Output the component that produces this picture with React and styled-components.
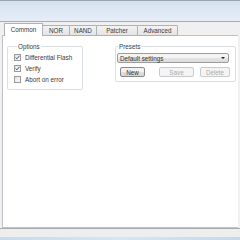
import React from "react";
import styled, { createGlobalStyle } from "styled-components";

const Global = createGlobalStyle`
  html, body { margin: 0; padding: 0; background: #f0f0f0; }
  body { font-family: "Liberation Sans", Arial, sans-serif; }
`;

const Window = styled.div`
  width: 240px;
  height: 240px;
  display: flex;
  flex-direction: column;
  overflow: hidden;
  background: #f0f0f0;
  font-family: "Liberation Sans", Arial, sans-serif;
  font-size: 6.3px;
  color: #3a3a3a;
`;

const TitleBand = styled.div`
  height: 20px;
  border-top: 1px solid #9aa4ae;
  border-bottom: 1px solid #a7acb2;
  background: linear-gradient(#d4e2f0, #e6eef7);
  flex: none;
`;

const Body = styled.div`
  flex: 1;
  display: flex;
  flex-direction: column;
  padding: 2px 2px 0 2px;
  min-height: 0;
`;

const TabBar = styled.div`
  display: flex;
  align-items: flex-end;
  height: 12px;
  padding-left: 2px;
  position: relative;
  z-index: 1;
  margin-bottom: -1px;
`;

const Tab = styled.div`
  box-sizing: border-box;
  width: ${(p) => p.$w}px;
  height: ${(p) => (p.$active ? 13 : 11)}px;
  margin-left: ${(p) => (p.$first ? 0 : -1)}px;
  border: 1px solid #aeb1b7;
  border-bottom: ${(p) => (p.$active ? "none" : "1px solid #aeb1b7")};
  border-radius: 1px 1px 0 0;
  background: ${(p) =>
    p.$active ? "#ffffff" : "linear-gradient(#f3f3f3, #e4e4e4)"};
  display: flex;
  align-items: center;
  justify-content: center;
  padding-bottom: ${(p) => (p.$active ? 1 : 0)}px;
  color: #3a3a3a;
  white-space: nowrap;
  ${(p) => (p.$active ? "position: relative; z-index: 2;" : "")}
`;

const Panel = styled.div`
  flex: 1;
  background: #ffffff;
  border: 1px solid #bfc2c7;
  border-right: none;
  display: flex;
  align-items: flex-start;
  padding: 7px 0 0 4px;
  gap: 32px;
`;

const Group = styled.fieldset`
  box-sizing: border-box;
  margin: 0;
  width: ${(p) => p.$w}px;
  height: ${(p) => p.$h}px;
  border: 1px solid #dadfe3;
  border-radius: 2px;
  padding: ${(p) => p.$pad};
  min-width: 0;
`;

const Legend = styled.legend`
  padding: 0 1px;
  margin-left: ${(p) => p.$ml}px;
  font-size: 6.3px;
  line-height: 7px;
  color: #3a3a3a;
`;

const CheckList = styled.div`
  display: flex;
  flex-direction: column;
  gap: 4px;
`;

const CheckRow = styled.label`
  display: flex;
  align-items: center;
  gap: 4px;
  height: 7px;
  white-space: nowrap;
  color: #3a3a3a;
`;

const Box = styled.span`
  box-sizing: border-box;
  width: 7px;
  height: 7px;
  border: 1px solid #9a9a9a;
  background: linear-gradient(135deg, #e3e3e3, #fafafa);
  display: flex;
  align-items: center;
  justify-content: center;
  flex: none;
`;

const Combo = styled.div`
  box-sizing: border-box;
  width: 112px;
  height: 10px;
  border: 1px solid #9a9b9b;
  border-radius: 2px;
  background: linear-gradient(#f4f4f4 45%, #e2e2e2 55%, #dcdcdc);
  display: flex;
  align-items: center;
  justify-content: space-between;
  padding: 0 3px 0 2px;
  color: #333;
`;

const Arrow = styled.span`
  width: 0;
  height: 0;
  border-left: 2px solid transparent;
  border-right: 2px solid transparent;
  border-top: 2px solid #222;
`;

const ButtonRow = styled.div`
  display: flex;
  margin-top: 4px;
  padding-left: 3px;
`;

const Button = styled.div`
  box-sizing: border-box;
  width: ${(p) => p.$w}px;
  height: 10px;
  margin-left: ${(p) => p.$ml}px;
  border: 1px solid ${(p) => (p.$disabled ? "#c8cbce" : "#8a8a8a")};
  border-radius: 2px;
  background: ${(p) =>
    p.$disabled
      ? "#f4f4f4"
      : "linear-gradient(#f2f2f2 45%, #e0e0e0 55%, #d4d4d4)"};
  color: ${(p) => (p.$disabled ? "#ababab" : "#333")};
  display: flex;
  align-items: center;
  justify-content: center;
`;

const Footer = styled.div`
  flex: none;
  height: 11px;
  border-top: 1px solid #a9acb0;
  background: #eeeeee;
  display: flex;
  flex-direction: column;
  justify-content: flex-end;
`;

const BlueStrip = styled.div`
  height: 3px;
  background: linear-gradient(90deg, #c6dbef, #d5e5f4, #c4d9ee);
`;

const Check = () => (
  <svg width="5" height="5" viewBox="0 0 5 5">
    <path d="M0.6 2.6 L1.9 3.9 L4.4 0.8" stroke="#3d5c8c" strokeWidth="1" fill="none" />
  </svg>
);

const tabs = [
  { label: "Common", w: 39, active: true },
  { label: "NOR", w: 28 },
  { label: "NAND", w: 28 },
  { label: "Patcher", w: 42 },
  { label: "Advanced", w: 41 },
];

const options = [
  { label: "Differential Flash", checked: true },
  { label: "Verify", checked: true },
  { label: "Abort on error", checked: false },
];

export default function App() {
  return (
    <Window>
      <Global />
      <TitleBand />
      <Body>
        <TabBar>
          {tabs.map((t, i) => (
            <Tab key={t.label} $w={t.w} $active={t.active} $first={i === 0}>
              {t.label}
            </Tab>
          ))}
        </TabBar>
        <Panel>
          <Group $w={76} $h={47} $pad="4px 0 0 6px">
            <Legend $ml={3}>Options</Legend>
            <CheckList>
              {options.map((o) => (
                <CheckRow key={o.label}>
                  <Box>{o.checked && <Check />}</Box>
                  {o.label}
                </CheckRow>
              ))}
            </CheckList>
          </Group>
          <Group $w={121} $h={39} $pad="3px 0 0 1px">
            <Legend $ml={1}>Presets</Legend>
            <Combo>
              <span>Default settings</span>
              <Arrow />
            </Combo>
            <ButtonRow>
              <Button $w={25} $ml={0}>New</Button>
              <Button $w={35} $ml={14} $disabled>Save</Button>
              <Button $w={30} $ml={6} $disabled>Delete</Button>
            </ButtonRow>
          </Group>
        </Panel>
      </Body>
      <Footer>
        <BlueStrip />
      </Footer>
    </Window>
  );
}
